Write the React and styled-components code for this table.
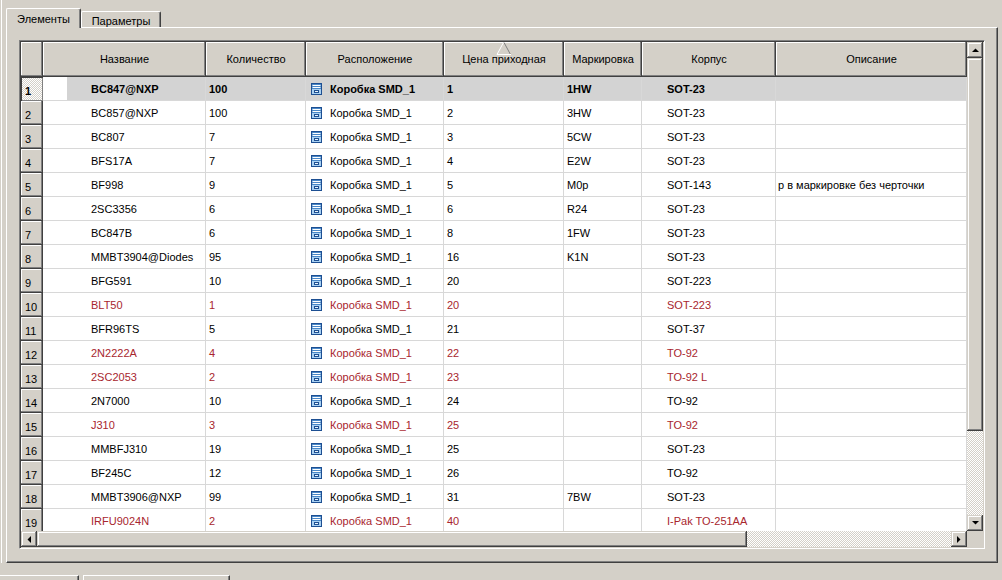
import React from 'react'
import styled, { createGlobalStyle, css } from 'styled-components'

const GlobalStyle = createGlobalStyle`
  html, body {
    margin: 0;
    padding: 0;
    background: #d4d0c8;
  }
  body {
    font-family: Tahoma, "Liberation Sans", "DejaVu Sans", sans-serif;
    font-size: 11px;
    color: #000;
  }
  * { box-sizing: border-box; }
`

const face = '#d4d0c8'
const red = '#a8262e'
const line = '#d8d8d8'

const raised = css`
  background: ${face};
  box-shadow: inset -1px -1px #404040, inset 1px 1px ${face}, inset -2px -2px #808080, inset 2px 2px #fff;
`
const checker = css`
  background: repeating-conic-gradient(${face} 0 25%, #fff 0 50%) 0 0 / 2px 2px;
`

const Screen = styled.div`
  width: 1002px;
  height: 580px;
  overflow: hidden;
  display: flex;
  flex-direction: column;
`

const Upper = styled.div`
  height: 563px;
  margin-left: 1px;
  border-left: 1px solid #fff;
  padding-left: 4px;
  display: flex;
  flex-direction: column;
`

const TabStrip = styled.div`
  height: 27px;
  display: flex;
  align-items: flex-end;
`

const Tab = styled.div`
  position: relative;
  z-index: 1;
  width: ${(p) => (p.$active ? 75 : 80)}px;
  height: ${(p) => (p.$active ? 20 : 16)}px;
  margin-bottom: ${(p) => (p.$active ? -1 : 0)}px;
  background: ${face};
  border-top: 1px solid #fff;
  border-left: 1px solid #fff;
  border-right: 1px solid #404040;
  box-shadow: inset -1px 0 #808080;
  border-radius: 2px 2px 0 0;
  display: flex;
  justify-content: center;
  align-items: center;
  padding-top: ${(p) => (p.$active ? 1 : 2)}px;
`

const Panel = styled.div`
  width: 992px;
  height: 536px;
  border-top: 1px solid #fff;
  border-left: 1px solid #fff;
  border-right: 1px solid #404040;
  border-bottom: 1px solid #404040;
  box-shadow: inset -1px -1px #808080;
  padding: 12px 0 0 12px;
`

const Grid = styled.div`
  width: 966px;
  height: 509px;
  border: 1px solid;
  border-color: #808080 #fff #fff #808080;
  box-shadow: inset 1px 1px #404040, inset -1px -1px ${face};
  padding: 1px;
  display: flex;
  flex-direction: column;
`

const GridMain = styled.div`
  height: 489px;
  display: flex;
`

const Viewport = styled.div`
  width: 946px;
  overflow: hidden;
  background: #fff;
`

const HeaderRow = styled.div`
  display: flex;
  height: 35px;
`

const HeaderCell = styled.div`
  position: relative;
  flex: 0 0 ${(p) => p.$w}px;
  height: 35px;
  background: ${face};
  box-shadow: inset -1px -1px #404040, inset -2px -2px #808080, inset 1px 1px #fff;
  display: flex;
  align-items: center;
  justify-content: center;
  white-space: nowrap;
  padding-bottom: 1px;
`

const SortMark = styled.svg`
  position: absolute;
  left: 52px;
  top: 0;
`

const Row = styled.div`
  display: flex;
  height: 24px;
  background: ${(p) => (p.$sel ? '#d3d3d3' : '#fff')};
  color: ${(p) => (p.$red ? red : '#000')};
  font-weight: ${(p) => (p.$sel ? 'bold' : 'normal')};
`

const RowHead = styled.div`
  flex: 0 0 22px;
  height: 24px;
  padding: 3px 0 0 4px;
  display: flex;
  align-items: center;
  font-weight: normal;
  color: #000;
  ${(p) =>
    p.$sel
      ? css`
          ${checker};
          box-shadow: inset 1px 1px #404040, inset -1px -1px #808080;
          font-weight: bold;
        `
      : css`
          background: ${face};
          box-shadow: inset -1px -1px #404040, inset -2px -2px #808080, inset 1px 1px #fff;
        `}
`

const Cell = styled.div`
  flex: 0 0 ${(p) => p.$w}px;
  height: 24px;
  padding-left: ${(p) => p.$pad}px;
  padding-top: 1px;
  border-right: 1px solid ${line};
  border-bottom: 1px solid ${line};
  display: flex;
  align-items: center;
  gap: 8px;
  white-space: nowrap;
  overflow: hidden;
  ${(p) =>
    p.$mark &&
    css`
      background: linear-gradient(to right, #fff 24px, transparent 24px);
    `}
`

const VScroll = styled.div`
  width: 16px;
  display: flex;
  flex-direction: column;
`

const HScrollRow = styled.div`
  height: 16px;
  display: flex;
`

const HScroll = styled.div`
  width: 946px;
  display: flex;
`

const Corner = styled.div`
  width: 16px;
  background: ${face};
`

const ScrollBtn = styled.div`
  flex: 0 0 16px;
  width: 16px;
  height: 16px;
  ${raised};
  display: flex;
  align-items: center;
  justify-content: center;
`

const Thumb = styled.div`
  flex: 0 0 ${(p) => p.$size}px;
  ${raised};
`

const Track = styled.div`
  flex: 1;
  ${checker};
`

const BottomStrip = styled.div`
  flex: 1;
  padding-top: 12px;
  display: flex;
  gap: 4px;
`

const BottomTab = styled.div`
  width: ${(p) => p.$w}px;
  border-top: 1px solid #fff;
  border-left: ${(p) => (p.$first ? 'none' : '1px solid #fff')};
  border-right: 1px solid #404040;
  box-shadow: inset -1px 0 #808080;
`

const Arrow = ({ dir }) => {
  const shapes = {
    up: { w: 7, h: 4, pts: '0,4 7,4 3.5,0.5' },
    down: { w: 7, h: 4, pts: '0,0 7,0 3.5,3.5' },
    left: { w: 4, h: 7, pts: '4,0 4,7 0.5,3.5' },
    right: { w: 4, h: 7, pts: '0,0 0,7 3.5,3.5' },
  }
  const s = shapes[dir]
  return (
    <svg width={s.w} height={s.h} viewBox={`0 0 ${s.w} ${s.h}`}>
      <polygon points={s.pts} fill="#000" />
    </svg>
  )
}

const BoxIcon = () => (
  <svg width="11" height="12" viewBox="0 0 11 12">
    <rect x="0.5" y="0.5" width="10" height="11" fill="#5f9ad6" stroke="#1d4f92" />
    <rect x="1" y="1" width="9" height="5" fill="#4a88c8" />
    <line x1="1.5" x2="9.5" y1="2.5" y2="2.5" stroke="#fff" />
    <line x1="1.5" x2="9.5" y1="4.5" y2="4.5" stroke="#fff" />
    <rect x="1" y="6" width="9" height="5" fill="#a8d0f2" />
    <rect x="3.5" y="7.5" width="4" height="2" fill="#e8f4ff" stroke="#1d4f92" />
  </svg>
)

const columns = [
  { key: 'name', title: 'Название', width: 163, pad: 48 },
  { key: 'qty', title: 'Количество', width: 100, pad: 3 },
  { key: 'loc', title: 'Расположение', width: 138, pad: 5 },
  { key: 'price', title: 'Цена приходная', width: 120, pad: 3, sorted: true },
  { key: 'mark', title: 'Маркировка', width: 78, pad: 3 },
  { key: 'corp', title: 'Корпус', width: 134, pad: 25 },
  { key: 'desc', title: 'Описание', width: 191, pad: 2 },
]

const rows = [
  ['BC847@NXP', '100', '1', '1HW', 'SOT-23', ''],
  ['BC857@NXP', '100', '2', '3HW', 'SOT-23', ''],
  ['BC807', '7', '3', '5CW', 'SOT-23', ''],
  ['BFS17A', '7', '4', 'E2W', 'SOT-23', ''],
  ['BF998', '9', '5', 'M0p', 'SOT-143', 'р в маркировке без черточки'],
  ['2SC3356', '6', '6', 'R24', 'SOT-23', ''],
  ['BC847B', '6', '8', '1FW', 'SOT-23', ''],
  ['MMBT3904@Diodes', '95', '16', 'K1N', 'SOT-23', ''],
  ['BFG591', '10', '20', '', 'SOT-223', ''],
  ['BLT50', '1', '20', '', 'SOT-223', '', true],
  ['BFR96TS', '5', '21', '', 'SOT-37', ''],
  ['2N2222A', '4', '22', '', 'TO-92', '', true],
  ['2SC2053', '2', '23', '', 'TO-92 L', '', true],
  ['2N7000', '10', '24', '', 'TO-92', ''],
  ['J310', '3', '25', '', 'TO-92', '', true],
  ['MMBFJ310', '19', '25', '', 'SOT-23', ''],
  ['BF245C', '12', '26', '', 'TO-92', ''],
  ['MMBT3906@NXP', '99', '31', '7BW', 'SOT-23', ''],
  ['IRFU9024N', '2', '40', '', 'I-Pak TO-251AA', '', true],
].map(([name, qty, price, mark, corp, desc, isRed]) => ({
  name,
  qty,
  loc: 'Коробка SMD_1',
  price,
  mark,
  corp,
  desc,
  isRed: !!isRed,
}))

const App = () => {
  return (
    <Screen>
      <GlobalStyle />
      <Upper>
        <TabStrip>
          <Tab $active>Элементы</Tab>
          <Tab>Параметры</Tab>
        </TabStrip>
        <Panel>
          <Grid>
            <GridMain>
              <Viewport>
                <HeaderRow>
                  <HeaderCell $w={22} />
                  {columns.map((c) => (
                    <HeaderCell key={c.key} $w={c.width}>
                      {c.title}
                      {c.sorted && (
                        <SortMark width="16" height="13" viewBox="0 0 16 13">
                          <line x1="7.5" y1="0.5" x2="1" y2="12.5" stroke="#fff" />
                          <line x1="8" y1="0.5" x2="14.5" y2="12.5" stroke="#808080" />
                          <line x1="1" y1="12.5" x2="15" y2="12.5" stroke="#fff" />
                        </SortMark>
                      )}
                    </HeaderCell>
                  ))}
                </HeaderRow>
                {rows.map((r, i) => {
                  const sel = i === 0
                  return (
                    <Row key={i} $sel={sel} $red={r.isRed}>
                      <RowHead $sel={sel}>{i + 1}</RowHead>
                      {columns.map((c) => (
                        <Cell key={c.key} $w={c.width} $pad={c.pad} $mark={sel && c.key === 'name'}>
                          {c.key === 'loc' && <BoxIcon />}
                          {r[c.key]}
                        </Cell>
                      ))}
                    </Row>
                  )
                })}
              </Viewport>
              <VScroll>
                <ScrollBtn>
                  <Arrow dir="up" />
                </ScrollBtn>
                <Thumb $size={373} />
                <Track />
                <ScrollBtn>
                  <Arrow dir="down" />
                </ScrollBtn>
              </VScroll>
            </GridMain>
            <HScrollRow>
              <HScroll>
                <ScrollBtn>
                  <Arrow dir="left" />
                </ScrollBtn>
                <Thumb $size={710} />
                <Track />
                <ScrollBtn>
                  <Arrow dir="right" />
                </ScrollBtn>
              </HScroll>
              <Corner />
            </HScrollRow>
          </Grid>
        </Panel>
      </Upper>
      <BottomStrip>
        <BottomTab $first $w={79} />
        <BottomTab $w={147} />
      </BottomStrip>
    </Screen>
  )
}

export default App
